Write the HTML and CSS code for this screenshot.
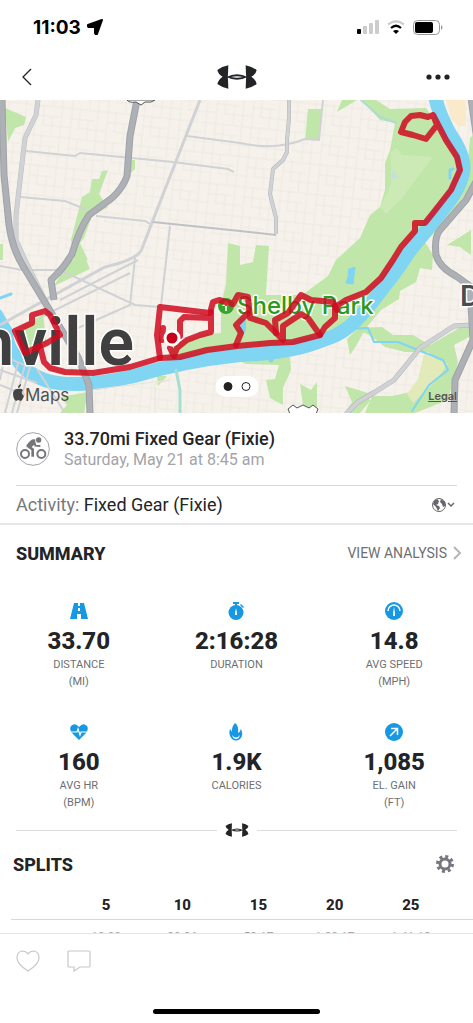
FILE: index.html
```html
<!DOCTYPE html>
<html lang="en">
<head>
    <meta charset="utf-8">
    <title>Workout - 33.70mi Fixed Gear (Fixie)</title>
    <meta name="viewport" content="width=device-width, initial-scale=1.0">
    <link rel="stylesheet" href="styles.css">
</head>
<body>
    <!-- shared logo -->
    <svg class="defs" width="0" height="0" aria-hidden="true">
        <symbol id="logo" viewBox="0 0 120 72">
            <path d="M34 1Q14 5 1 15Q4 29 17 35Q4 43 1 57Q14 67 34 71L33 44Q32 36 33 28ZM86 1Q106 5 119 15Q116 29 103 35Q116 43 119 57Q106 67 86 71L87 44Q88 36 87 28Z"/>
            <path d="M28 36Q60 20 92 36Q60 52 28 36ZM42 36Q60 41 78 36Q60 31 42 36Z" fill-rule="evenodd"/>
        </symbol>
    </svg>

    <div class="status-bar">
        <div class="clock">
            <span>11:03</span>
            <svg width="16" height="16" viewBox="0 0 16 16"><path d="M15 1L10 15Q9 16 8 14V8H2Q0 7 1 6Z" stroke="#000" stroke-linejoin="round"/></svg>
        </div>
        <div class="signals">
            <svg width="22" height="15" viewBox="0 0 22 15">
                <rect x="0" y="9" width="4" height="5" rx="1"/>
                <g fill="#ccc"><rect x="6" y="6" width="4" height="8" rx="1"/><rect x="12" y="3" width="4" height="11" rx="1"/><rect x="18" y="0" width="4" height="14" rx="1"/></g>
            </svg>
            <svg width="18" height="14" viewBox="0 0 18 14" fill="none" stroke-width="2.2">
                <path d="M1 4.5Q9-2 17 4.5" stroke="#ccc"/>
                <path d="M4 8Q9 3.5 14 8" stroke="#000"/>
                <path d="M6 11Q9 9 12 11L9 14Z" fill="#000"/>
            </svg>
            <svg width="30" height="15" viewBox="0 0 30 15">
                <rect x=".5" y=".5" width="26" height="14" rx="4" fill="none" stroke="#999"/>
                <rect x="2" y="2" width="18" height="11" rx="2"/>
                <path d="M28 5Q31 7.5 28 10Z" fill="#999"/>
            </svg>
        </div>
    </div>

    <header class="nav">
        <button class="icon-btn" aria-label="Back">
            <svg width="10" height="18" viewBox="0 0 10 18" fill="none" stroke="#222" stroke-width="1.3"><path d="M9 1L1 9L9 17"/></svg>
        </button>
        <svg class="logo" width="40" height="24"><use href="#logo"/></svg>
        <button class="icon-btn" aria-label="More">
            <svg width="24" height="6" viewBox="0 0 24 6" fill="#222"><circle cx="3" cy="3" r="2.6"/><circle cx="12" cy="3" r="2.6"/><circle cx="21" cy="3" r="2.6"/></svg>
        </button>
    </header>

    <main>
        <section class="map">
            <svg class="map-canvas" viewBox="0 0 473 313" preserveAspectRatio="xMidYMid slice">
                <defs>
                    <pattern id="streets" width="36" height="30" patternUnits="userSpaceOnUse" patternTransform="rotate(6)">
                        <path d="M0 1H36M0 11H24M8 20H36M1 0V30M9 0V20M18 11V30M27 0V30" fill="none" stroke="#ece9e2"/>
                    </pattern>
                </defs>
                <rect width="473" height="313" fill="#f6f2eb"/>
                <rect width="473" height="313" fill="url(#streets)"/>

                <!-- parks -->
                <g fill="#c0e6a9">
                    <path d="M5 8L26 17L24 25L15 28L8 42Z"/>
                    <path d="M102 71L108 70L99 94L108 107L92 116L84 138L80 143L88 160L74 160L71 140L82 97L90 92L92 79L99 79Z"/>
                    <path d="M131 60H135V69L129 75Z"/>
                    <path d="M308 9H322L319 40H305ZM342 0H357L337 12Z"/>
                    <path d="M68 162L84 155L90 169L54 186Z"/>
                    <path d="M0 144H3V160H0Z"/>
                    <path d="M362 0H376L390 9L426 8L450 40L461 65L445 110L400 165L370 205L335 236L240 251L165 260L175 243L205 234L221 233L221 205L226 184L228 143L240 146L240 165L253 162L256 145L269 146L266 195H302L328 176L336 160L360 138L370 115L380 107L385 90V63L390 50L395 23L380 20Z"/>
                    <path d="M470 38L473 35V83L444 124L425 142L433 155L432 170L420 168L416 182L400 191L399 199L381 210L366 228L356 246L350 255L347 239L358 228L382 227L393 235H413L430 245L473 220V235L454 245L458 262L448 300L415 313H365L372 296H392L424 289L440 263L428 252L405 252L385 247L371 236L349 225L385 185L432 127L466 82Z"/>
                    <path d="M233 258L279 254L290 257L291 270L283 288V305L270 298L266 280L275 279L279 265L246 264Z"/>
                    <path d="M300 284L311 290L317 282V312H304ZM345 286L368 293L370 301L360 313H345L352 302Z"/>
                    <path d="M15 230L43 215L47 244L27 250ZM60 297L88 292L84 313H60L67 305ZM157 276H167L158 286Z"/>
                    <path d="M447 145L471 130V155L460 147Z"/>
                </g>
                <path d="M391 52L397 48L402 55L433 57L402 98L386 114L380 107L391 84Z" fill="#cbeab6"/>
                <path d="M424 254L448 264L435 282L413 303L407 294L418 279Z" fill="#e2eab9"/>
                <path d="M446 0H466V25L459 27L452 20Z" fill="#fbe9cc"/>
                <path d="M393 69L398 77L391 80Z" fill="#c6dfda"/>

                <!-- water -->
                <g fill="none" stroke="#80d5f2" stroke-linecap="round" stroke-linejoin="round">
                    <path d="M435 -4Q438 12 450 34Q466 57 463 73Q460 87 448 103Q430 126 408 153C394 176 383 187 370 205C356 221 345 234 323 240Q292 253 240 255Q183 261 134 276Q80 289 48 281Q25 274 16 257Q7 248 6 232L-4 215" stroke-width="14"/>
                    <path d="M346 229L368 228L374 242L398 242L443 260L448 270L429 285L412 311" stroke-width="2"/>
                    <path d="M361 0L380 17L396 23" stroke-width="2" stroke="#acdcd4"/>
                    <path d="M176 270L180 290V313" stroke-width="3" stroke="#a4dfd0"/>
                    <path d="M0 198L11 194M453 69L450 70V78" stroke-width="3"/>
                    <path d="M243 221V230" stroke-width="6"/>
                    <path d="M349 169L355 167L353 184L346 183L348 177Z" fill="#80d5f2" stroke-width="1"/>
                    <path d="M270 257L271 260" stroke-width="5"/>
                </g>

                <!-- secondary roads -->
                <g fill="none" stroke="#d1d2d5" stroke-width="2">
                    <path d="M26 51L75 56L80 53L173 62L228 69L234 72"/>
                    <path d="M20 97L65 101L85 109M96 116L145 121L150 124"/>
                    <path d="M200 0L153 120L141 151Q135 160 105 167L0 225" stroke-width="3"/>
                    <path d="M187 36L240 43Q276 51 305 39L319 40L323 0"/>
                    <path d="M153 122L240 131L276 135" stroke="#bfc1c5"/>
                    <path d="M170 126L161 206M135 158L130 205L78 228"/>
                    <path d="M0 166L22 170L60 170L135 205L160 207"/>
                    <path d="M60 200L138 160M43 216L130 173"/>
                    <path d="M0 255L25 265L12 313M30 267L17 313M0 285L25 295M5 255L0 280M18 263L5 313M0 270L37 283M37 269L65 313"/>
                </g>
                <path d="M170 280L155 284V313M90 290L170 280" fill="none" stroke="#e6e4de"/>
                <!-- casing and fill of the wider streets -->
                <g fill="none" stroke-linejoin="round">
                    <path d="M289 0V18L287 40V52L283 60L273 69L270 94L276 118V134" stroke="#b5b7bb" stroke-width="4"/>
                    <path d="M289 0V18L287 40V52L283 60L273 69L270 94L276 118V134" stroke="#d0d2d5" stroke-width="3"/>
                    <path d="M38 0L36 15L25 38L16 115L16 140L25 160L54 218" stroke="#bcbec3" stroke-width="5"/>
                    <path d="M38 0L36 15L25 38L16 115L16 140L25 160L54 218" stroke="#d0d2d5" stroke-width="4"/>
                    <path d="M473 225L454 226L420 248L394 280L375 292L358 302L346 314" stroke="#b0b2b7" stroke-width="5"/>
                    <path d="M473 225L454 226L420 248L394 280L375 292L358 302L346 314" stroke="#cfd1d4" stroke-width="4"/>
                </g>
                <!-- highways -->
                <g fill="none" stroke="#9fa2a8" stroke-width="7" stroke-linejoin="round">
                    <path d="M2 -2L4 75L8 115Q10 145 23 166L52 214L78 257L89 285L90 314"/>
                    <path d="M137 0L130 36L127 76Q123 88 112 98L89 115Q79 130 72 154Q64 168 51 180L54 200"/>
                    <path d="M471 -2L477 40V80L466 100L440 130Q434 137 436 155Q440 168 456 176L470 186L473 240L455 280L454 314"/>
                </g>
                <g fill="none" stroke="#adb0b5" stroke-width="5" stroke-linejoin="round">
                    <path d="M2 -2L4 75L8 115Q10 145 23 166L52 214L78 257L89 285L90 314"/>
                    <path d="M137 0L130 36L127 76Q123 88 112 98L89 115Q79 130 72 154Q64 168 51 180L54 200"/>
                    <path d="M471 -2L477 40V80L466 100L440 130Q434 137 436 155Q440 168 456 176L470 186L473 240L455 280L454 314"/>
                </g>

                <!-- highway shields cut off by the edges -->
                <path d="M127 0Q129 3 136 2L141 5L145 2Q152 3 155 0Z" fill="#fff" stroke="#555"/>
                <path d="M288 309L293 305L297 308L303 305L309 308L313 305L318 309L316 314H290Z" fill="#fff" stroke="#555"/>

                <!-- place names -->
                <text class="city" x="134" y="265" text-anchor="end">Nashville</text>
                <text class="town" x="460" y="206">Donelson</text>
                <circle cx="226" cy="206" r="8" fill="#36a52b"/>
                <path d="M226 200L222 206H230ZM225 205H227V211H225Z" fill="#dff3d8"/>
                <text class="park" x="237" y="214">Shelby Park</text>

                <!-- recorded route -->
                <g class="route">
                    <path d="M433 15L428 17L420 15L411 16L405 22L401 32L413 35L426 39L437 25L433 15L446 40L457 57L460 70L451 90L433 113L425 123L415 123L415 131L401 147L393 160L381 178L366 192L346 200L335 207L335 218L325 227L320 235L293 242L270 243L237 246L207 250L180 257L160 258L130 267L93 273L65 272L50 268L44 262L40 246"/>
                    <path d="M40 246L47 243L60 235L50 215L45 211L32 215V223L15 231L25 253Z"/>
                    <path d="M160 258L157 235L160 207L210 213L213 202L219 200L233 204L238 195L248 197L250 218L266 223L276 233L283 240V226L301 214L308 218L320 235"/>
                    <path d="M210 218L184 217L180 221V236M170 248L174 256L177 248L187 240L200 235L211 232V212"/>
                    <path d="M236 245L241 233L236 225L248 213M276 233L275 220L288 213L301 195L311 200L333 202L337 210M162 240L163 228"/>
                </g>
                <circle cx="172" cy="238" r="7" fill="#c90019" stroke="#fff" stroke-width="3"/>

                <path d="M17 289Q14 289 13 293Q13 299 16 301L18 300L21 301Q23 299 24 296Q20 293 23 290Q21 288 19 289ZM18 288Q18 285 21 284Q21 287 18 288Z" fill="#444"/>
                <text class="maps" x="25" y="301">Maps</text>
            </svg>
            <a class="legal" href="#">Legal</a>
            <div class="pager">
                <button class="dot active" aria-label="Map"></button>
                <button class="dot" aria-label="Photo"></button>
            </div>
        </section>

        <section class="workout">
            <div class="workout-title">
                <svg width="34" height="34" viewBox="0 0 102 102" fill="none" stroke="#75767c">
                    <circle cx="51" cy="51" r="49" stroke-width="2"/>
                    <circle cx="27" cy="66" r="12" stroke-width="6"/>
                    <circle cx="76" cy="66" r="12" stroke-width="6"/>
                    <circle cx="68" cy="24" r="8" fill="#75767c" stroke="none"/>
                    <path d="M54 25Q43 28 36 42L50 52V74" stroke-width="8"/>
                    <path d="M54 26L58 41L73 42" stroke-width="6"/>
                    <path d="M58 20L31 39L43 49L57 36Z" fill="#75767c" stroke="none"/>
                </svg>
                <div>
                    <h1>33.70mi Fixed Gear (Fixie)</h1>
                    <p class="date">Saturday, May 21 at 8:45 am</p>
                </div>
            </div>
            <div class="activity">
                <p><span class="muted">Activity:</span> Fixed Gear (Fixie)</p>
                <button class="privacy" aria-label="Privacy: everyone">
                    <svg width="24" height="16" viewBox="0 0 24 16" fill="none" stroke="#66676c">
                        <circle cx="8" cy="8" r="6.5"/>
                        <path d="M3 4L6 2L8 4L7 7L5 8L8 9L9 11L7 14L5 10L2 7ZM10 2L14 5V9L12 10L11 7L9 5Z" fill="#66676c" stroke="none"/>
                        <path d="M17 6L20 9L23 6" stroke-width="1.5"/>
                    </svg>
                </button>
            </div>
        </section>

        <section class="summary">
            <div class="section-head">
                <h2>SUMMARY</h2>
                <a class="analysis" href="#">VIEW ANALYSIS
                    <svg width="9" height="14" viewBox="0 0 9 14" fill="none" stroke="#b4b5ba" stroke-width="2"><path d="M1 1L7 7L1 13"/></svg>
                </a>
            </div>
            <div class="stats">
                <div class="stat">
                    <svg viewBox="0 0 18 18"><path d="M4 1H8V4H10V1H14L18 17H11V12H7V17H0ZM8 6V9H10V6Z" fill-rule="evenodd"/></svg>
                    <strong>33.70</strong>
                    <span>DISTANCE<br>(MI)</span>
                </div>
                <div class="stat">
                    <svg viewBox="0 0 18 18"><circle cx="9" cy="10.5" r="7.5"/><path d="M6 0H12V2H10V4H8V2H6ZM14 2L17 5L16 6L13 3Z"/><path d="M9 6L10 11V13H8V11Z" fill="#fff"/></svg>
                    <strong>2:16:28</strong>
                    <span>DURATION</span>
                </div>
                <div class="stat">
                    <svg viewBox="0 0 18 18"><circle cx="9" cy="9" r="9"/><path d="M3 9A6 6 0 0 1 15 9" fill="none" stroke="#fff" stroke-width="1.5"/><path d="M9 5L10 11V14H8V11Z" fill="#fff"/></svg>
                    <strong>14.8</strong>
                    <span>AVG SPEED<br>(MPH)</span>
                </div>
                <div class="stat">
                    <svg viewBox="0 0 18 18"><path d="M9 17L2 10Q-1 6 1 3Q5-1 9 4Q13-1 17 3Q19 6 16 10Z"/><path d="M0 9H7L8 6L10 12L11 9H18" fill="none" stroke="#fff" stroke-width="1.2"/></svg>
                    <strong>160</strong>
                    <span>AVG HR<br>(BPM)</span>
                </div>
                <div class="stat">
                    <svg viewBox="0 0 18 18"><path d="M8 0Q4 4 5 9L3 6Q1 12 5 16Q9 19 13 16Q17 12 14 6Q13 9 11 10Q12 3 8 0Z"/><path d="M5 12Q9 17 13 12Q12 16 9 16Q6 16 5 12Z" fill="#fff"/></svg>
                    <strong>1.9K</strong>
                    <span>CALORIES</span>
                </div>
                <div class="stat">
                    <svg viewBox="0 0 18 18"><circle cx="9" cy="9" r="9"/><path d="M5 13L12 6M6 5.5H12.5V12" fill="none" stroke="#fff" stroke-width="1.5"/></svg>
                    <strong>1,085</strong>
                    <span>EL. GAIN<br>(FT)</span>
                </div>
            </div>
            <div class="divider">
                <svg width="24" height="14"><use href="#logo"/></svg>
            </div>
        </section>

        <section class="splits">
            <div class="section-head">
                <h2>SPLITS</h2>
                <button class="icon-btn" aria-label="Split settings">
                    <svg width="18" height="18" viewBox="0 0 18 18" fill="none" stroke="#75767f">
                        <circle cx="9" cy="9" r="7.5" stroke-width="3" stroke-dasharray="3 2.89"/>
                        <circle cx="9" cy="9" r="5" stroke-width="3"/>
                    </svg>
                </button>
            </div>
            <table>
                <thead>
                    <tr><th class="first"></th><th>5</th><th>10</th><th>15</th><th>20</th><th>25</th><th class="last"></th></tr>
                </thead>
                <tbody>
                    <tr><td></td><td>19:20</td><td>39:36</td><td>59:17</td><td>1:20:17</td><td>1:41:18</td><td></td></tr>
                </tbody>
            </table>
        </section>
    </main>

    <footer>
        <div class="actions">
            <button class="icon-btn" aria-label="Like">
                <svg width="24" height="22" viewBox="0 0 24 22" fill="none" stroke="#c8c8ca" stroke-width="1.2"><path d="M12 21Q1 14 1 8Q1 2 6 1Q10 1 12 4Q14 1 18 1Q23 2 23 8Q23 14 12 21Z"/></svg>
            </button>
            <button class="icon-btn" aria-label="Comment">
                <svg width="24" height="22" viewBox="0 0 24 22" fill="none" stroke="#c8c8ca" stroke-width="1.2"><path d="M2 1H22Q23 1 23 2V16Q23 17 22 17H13L7 21V17H2Q1 17 1 16V2Q1 1 2 1Z"/></svg>
            </button>
        </div>
        <div class="home-indicator"></div>
    </footer>
</body>
</html>
```

FILE: styles.css
```css
* {
    box-sizing: border-box;
}

body {
    margin: 0;
    height: 100vh;
    display: flex;
    flex-direction: column;
    background-color: #fff;
    color: #222427;
    font-family: Roboto, "Liberation Sans", sans-serif;
}

h1, h2, p {
    margin: 0;
}

svg {
    display: block;
    flex-shrink: 0;
}

button {
    background: none;
    border: none;
    padding: 0;
    cursor: pointer;
}

.defs {
    position: absolute;
}

/* Phone status bar */
.status-bar {
    display: flex;
    justify-content: space-between;
    align-items: center;
    height: 54px;
    padding: 0 30px 0 33px;
    flex-shrink: 0;
}

.clock {
    display: flex;
    align-items: center;
    gap: 6px;
    color: #000;
    font-family: Inter, sans-serif;
    font-size: 19px;
    font-weight: 700;
}

.clock path {
    stroke-width: 2px;
}

.signals {
    display: flex;
    align-items: center;
    gap: 8px;
}

.nav {
    display: flex;
    justify-content: space-between;
    align-items: center;
    height: 46px;
    padding: 0 22px;
    flex-shrink: 0;
}

.nav .icon-btn {
    display: flex;
    width: 25px;
}

.logo, .divider svg {
    fill: #222427;
}

main {
    flex: 1;
    min-height: 0;
    overflow-y: auto;
    scrollbar-width: none;
}

/* Map */
.map {
    position: relative;
}

.map-canvas {
    width: 100%;
    height: auto;
}

.map-canvas text {
    font-family: Inter, sans-serif;
    paint-order: stroke;
    stroke: #fff;
    stroke-width: 3px;
    stroke-linejoin: round;
}

.map-canvas .city {
    font-family: Roboto, sans-serif;
    font-size: 66px;
    font-weight: 600;
    fill: #404040;
}

.map-canvas .town {
    font-size: 28px;
    font-weight: 600;
    fill: #4a4c50;
}

.map-canvas .park {
    font-size: 24px;
    font-weight: 500;
    fill: #2b9a22;
}

.map-canvas .maps {
    font-size: 17px;
    fill: #505050;
    stroke: none;
}

.route {
    fill: none;
    stroke: #cf0a20;
    stroke-opacity: 0.85;
    stroke-width: 6px;
    stroke-linejoin: round;
    stroke-linecap: round;
}

.legal {
    position: absolute;
    right: 16px;
    bottom: 10px;
    color: #555;
    font-family: Inter, sans-serif;
    font-size: 11px;
    font-weight: 600;
}

.pager {
    position: absolute;
    left: 50%;
    bottom: 16px;
    transform: translateX(-50%);
    display: flex;
    gap: 9px;
    padding: 6px 8px;
    border-radius: 11px;
    background-color: #fff;
}

.dot {
    width: 9px;
    height: 9px;
    border: 1px solid #222;
    border-radius: 50%;
}

.dot.active {
    background-color: #222;
}

/* Workout title and activity type */
.workout {
    border-bottom: 2px solid #e6e6e6;
}

.workout-title {
    display: flex;
    align-items: center;
    gap: 14px;
    margin: 0 16px;
    height: 73px;
    border-bottom: 1px solid #d8d8d8;
}

h1 {
    font-size: 18px;
    line-height: 22px;
    font-weight: 500;
}

.date {
    color: #a3a4a9;
    font-size: 16px;
    line-height: 20px;
}

.activity {
    display: flex;
    justify-content: space-between;
    align-items: center;
    height: 37px;
    padding: 0 18px 0 16px;
    font-size: 18px;
}

.muted {
    color: #77787c;
}

/* Summary */
.section-head {
    display: flex;
    justify-content: space-between;
    align-items: center;
    height: 56px;
    padding: 0 11px 0 16px;
}

h2 {
    font-size: 18px;
    font-weight: 800;
}

.analysis {
    display: flex;
    align-items: center;
    gap: 6px;
    color: #6e6f74;
    font-size: 14px;
    text-decoration: none;
}

.stats {
    display: grid;
    grid-template-columns: repeat(3, 1fr);
    padding-top: 21px;
}

.stat {
    display: flex;
    flex-direction: column;
    align-items: center;
    height: 121px;
    text-align: center;
}

.stat svg {
    width: 18px;
    height: 18px;
    fill: #1698e2;
}

.stat strong {
    margin-top: 6px;
    font-size: 24px;
    line-height: 30px;
    font-weight: 800;
}

.stat span {
    color: #6e6f74;
    font-size: 11px;
    line-height: 17px;
}

.divider {
    display: flex;
    align-items: center;
    gap: 8px;
    margin: -21px 16px 0;
}

.divider::before,
.divider::after {
    content: "";
    flex: 1;
    height: 1px;
    background-color: #dcdcde;
}

/* Splits */
.splits .section-head {
    height: 54px;
    padding: 0 19px 0 13px;
}

table {
    width: calc(100% - 11px);
    margin-left: 11px;
    border-collapse: collapse;
    table-layout: fixed;
}

.first {
    width: 57px;
}

.last {
    width: 24px;
}

th {
    height: 28px;
    padding: 0;
    border-bottom: 1px solid #d8d8da;
    font-size: 15px;
    font-weight: 800;
}

td {
    height: 35px;
    padding: 0;
    color: #a6a7ab;
    font-size: 12px;
    text-align: center;
}

/* Bottom bar */
footer {
    display: flex;
    flex-direction: column;
    justify-content: space-between;
    height: 90px;
    padding: 16px 16px 9px;
    border-top: 1px solid #e4e4e6;
    flex-shrink: 0;
}

.actions {
    display: flex;
    gap: 27px;
}

.home-indicator {
    align-self: center;
    width: 38%;
    height: 5px;
    border-radius: 3px;
    background-color: #000;
}
```
